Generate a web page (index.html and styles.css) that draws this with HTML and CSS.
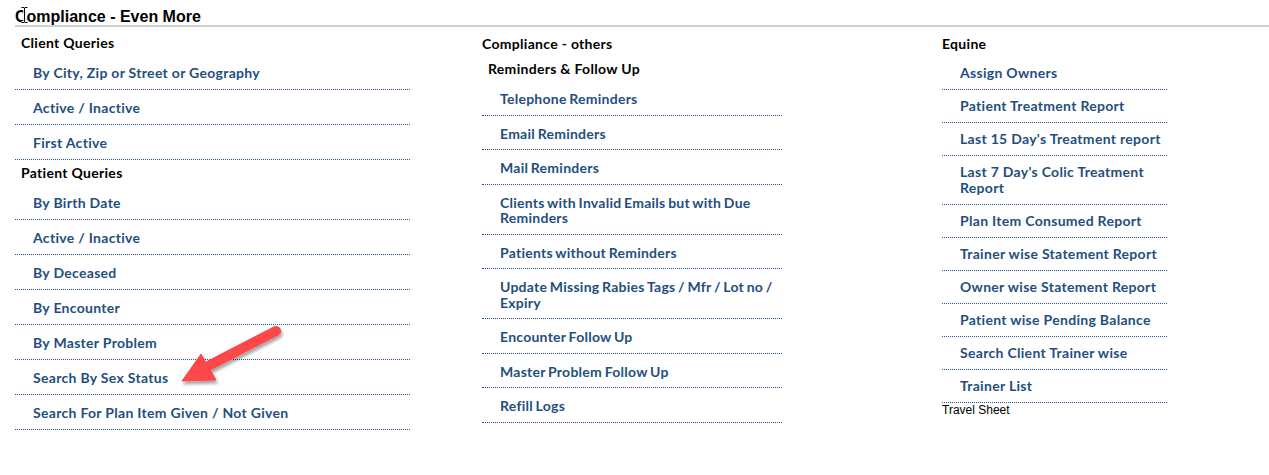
FILE: index.html
```html
<!DOCTYPE html>
<html>
<head>
<meta charset="utf-8">
<title>Compliance - Even More</title>
<link rel="stylesheet" href="styles.css">
</head>
<body>
<div class="page">
  <h1 class="title">Compliance - Even More</h1>
  <svg class="cursor" width="9" height="18" viewBox="0 0 9 18" aria-hidden="true">
    <path d="M1.5 1.5h2.5l0.5 0.6 0.5-0.6h2.5M4.5 2v14M1.5 16.5h2.5l0.5-0.6 0.5 0.6h2.5" fill="none" stroke="#fff" stroke-width="2.6"/>
    <path d="M1.5 1.5h2.5l0.5 0.6 0.5-0.6h2.5M4.5 2v14M1.5 16.5h2.5l0.5-0.6 0.5 0.6h2.5" fill="none" stroke="#000" stroke-width="1"/>
  </svg>
  <div class="cols">
    <section class="col col-a">
      <h2 class="group">Client Queries</h2>
      <ul class="links">
        <li><a href="#">By City, Zip or Street or Geography</a></li>
        <li><a href="#">Active / Inactive</a></li>
        <li><a href="#">First Active</a></li>
      </ul>
      <h2 class="group">Patient Queries</h2>
      <ul class="links">
        <li><a href="#">By Birth Date</a></li>
        <li><a href="#">Active / Inactive</a></li>
        <li><a href="#">By Deceased</a></li>
        <li><a href="#">By Encounter</a></li>
        <li><a href="#">By Master Problem</a></li>
        <li><a href="#">Search By Sex Status</a></li>
        <li><a href="#">Search For Plan Item Given / Not Given</a></li>
      </ul>
      <svg class="arrow" width="120" height="80" viewBox="0 0 120 80" aria-hidden="true">
        <defs>
          <filter id="sh" x="-20%" y="-20%" width="150%" height="160%">
            <feDropShadow dx="1.5" dy="3" stdDeviation="1.8" flood-color="#000" flood-opacity="0.35"/>
          </filter>
        </defs>
        <g filter="url(#sh)" fill="#fe4649" stroke="#fe4649">
          <line x1="106" y1="16" x2="40" y2="50" stroke-width="10" stroke-linecap="round"/>
          <polygon points="12,66 31,39 46,65" stroke-width="1" stroke-linejoin="round"/>
        </g>
      </svg>
    </section>
    <section class="col col-b">
      <h2 class="group flush">Compliance - others</h2>
      <h2 class="group sub">Reminders &amp; Follow Up</h2>
      <ul class="links">
        <li><a href="#">Telephone Reminders</a></li>
        <li><a href="#">Email Reminders</a></li>
        <li><a href="#">Mail Reminders</a></li>
        <li><a href="#">Clients with Invalid Emails but with Due Reminders</a></li>
        <li><a href="#">Patients without Reminders</a></li>
        <li><a href="#">Update Missing Rabies Tags / Mfr / Lot no / Expiry</a></li>
        <li><a href="#">Encounter Follow Up</a></li>
        <li><a href="#">Master Problem Follow Up</a></li>
        <li><a href="#">Refill Logs</a></li>
      </ul>
    </section>
    <section class="col col-c">
      <h2 class="group flush">Equine</h2>
      <ul class="links">
        <li><a href="#">Assign Owners</a></li>
        <li><a href="#">Patient Treatment Report</a></li>
        <li><a href="#">Last 15 Day's Treatment report</a></li>
        <li><a href="#">Last 7 Day's Colic Treatment Report</a></li>
        <li><a href="#">Plan Item Consumed Report</a></li>
        <li><a href="#">Trainer wise Statement Report</a></li>
        <li><a href="#">Owner wise Statement Report</a></li>
        <li><a href="#">Patient wise Pending Balance</a></li>
        <li><a href="#">Search Client Trainer wise</a></li>
        <li><a href="#">Trainer List</a></li>
      </ul>
      <div class="plain">Travel Sheet</div>
    </section>
  </div>
</div>
</body>
</html>
```
FILE: styles.css
```css
* { box-sizing: border-box; }

html, body {
  margin: 0;
  padding: 0;
  background: #ffffff;
}

.page {
  position: relative;
  padding: 8px 0 0 15px;
}

.title {
  margin: 0;
  font-family: "Liberation Sans", Arial, sans-serif;
  font-weight: bold;
  font-size: 16px;
  line-height: 17px;
  color: #000;
  border-bottom: 2px solid #d0d0d0;
  height: 19px;
}

.cursor {
  position: absolute;
  left: 20px;
  top: 6px;
}

.cols {
  display: grid;
  grid-template-columns: 467px 460px 1fr;
}

.col {
  position: relative;
  padding-top: 3px;
  font-family: Lato, "Open Sans", sans-serif;
  letter-spacing: 0.3px;
}

.group {
  margin: 5px 0 4px;
  padding-left: 6px;
  font-size: 14px;
  line-height: 16px;
  font-weight: bold;
  color: #000;
}

.col-b .group.flush,
.col-c .group.flush {
  padding-left: 0;
  margin-top: 6px;
}

.col-b .group.sub {
  margin-top: 9px;
}

.col-c .group.flush {
  margin-bottom: 5px;
}

.links {
  list-style: none;
  margin: 0;
  padding: 0;
}

.links li {
  border-bottom: 1px dotted #1f5184;
  padding: 10px 0 8px 18px;
  font-size: 14px;
  line-height: 16px;
}

.links a {
  color: #1f4f80;
  font-weight: bold;
  text-decoration: none;
}

.col-a .links { width: 395px; }

.col-b .links { width: 300px; }
.col-b .links li {
  line-height: 15.5px;
  letter-spacing: 0.25px;
  word-spacing: -1px;
}

.col-c .links { width: 225px; }
.col-c .links li {
  padding-top: 8px;
  padding-bottom: 8px;
}

.plain {
  font-family: "Liberation Sans", Arial, sans-serif;
  font-size: 12px;
  line-height: 14px;
  letter-spacing: 0;
  color: #000;
}

.arrow {
  position: absolute;
  left: 155px;
  top: 288px;
}
```
